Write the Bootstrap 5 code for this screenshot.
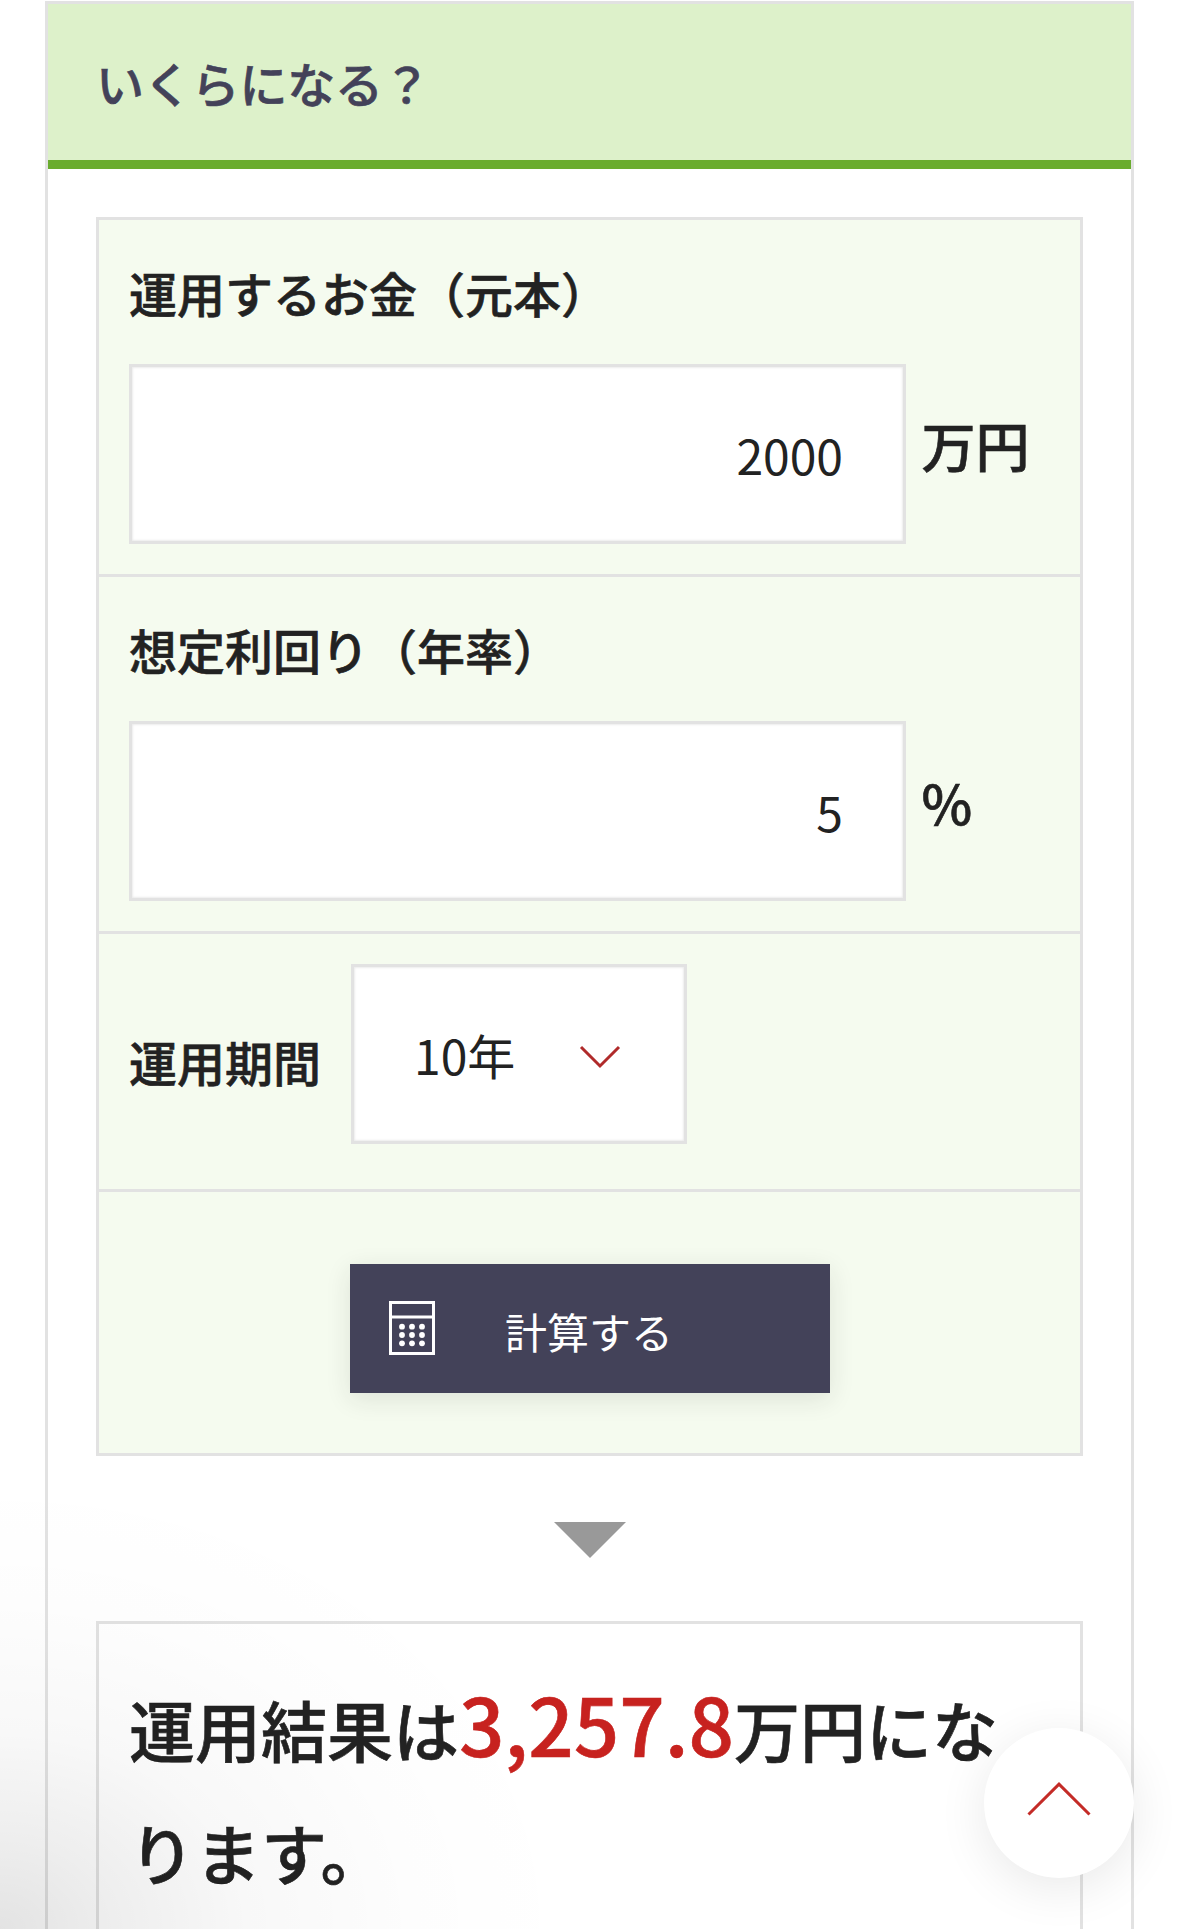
<!DOCTYPE html>
<html lang="ja">
<head>
<meta charset="utf-8">
<meta name="viewport" content="width=device-width, initial-scale=1">
<title>いくらになる？</title>
<link href="https://cdn.jsdelivr.net/npm/bootstrap@5.3.0/dist/css/bootstrap.min.css" rel="stylesheet">
<style>
  html, body { height: 1929px; overflow: hidden; }
  body { font-family: "Noto Sans CJK JP", sans-serif; color: #222; background: #fff; font-size: 48px; padding: 1px 45px 0; }
  .sim-panel { border: 3px solid #e2e2e2; border-bottom: 0; height: 1928px; }
  .sim-title, .sim-label, .sim-unit, .result-box { font-weight: 500; -webkit-text-stroke: .6px currentColor; }
  .sim-title { height: 165px; background: #ddf1ca; border-bottom: 9px solid #6aac2e; padding: 2px 48px 0; font-size: 48px; letter-spacing: -.2px; color: #434259; }
  .sim-body { padding: 48px 48px 0; }
  .sim-form { background: #f5fbef; border: 3px solid #e2e2e2; }
  .sim-row { border-bottom: 3px solid #e2e2e2; padding: 30px; }
  .field-row { height: 357px; padding-top: 36px; }
  .sim-label { font-size: 48px; line-height: 72px; display: block; margin: 0 0 36px; }
  .sim-input, .sim-select { height: 180px; border: 3px solid #e2e2e2; border-radius: 0; background: #fff; color: #222; font-size: 48px; line-height: 72px; box-shadow: inset 0 0 2px 1px #ececec; }
  .sim-input { width: 777px; flex: none; padding: 0 60px; text-align: right; }
  .sim-unit { font-size: 54px; line-height: 80px; padding: 0 0 18px 15.500px; }
  .period-row { height: 258px; }
  .period-row .sim-label { margin: 7px 30px 0 0; line-height: 180px; height: 180px; }
  .sim-select { width: 336px; padding: 0 63px 0 60px; }
  .sim-select svg { margin-top: 6px; }
  .calc-row { height: 261px; padding-top: 72px; }
  .calc-btn { width: 480px; height: 129px; border: 0; border-radius: 0; background: #434259; color: #fff; font-size: 42px; padding: 0 0 0 39px; box-shadow: 0 6px 24px rgba(34,34,34,.11); }
  .calc-btn:hover { background: #434259; color: #fff; }
  .calc-btn svg { margin-bottom: 2px; }
  .calc-btn span { margin-left: 70.500px; padding-top: 3px; }
  .down-mark { height: 165px; padding-top: 66px; }
  .result-box { border: 3px solid #e2e2e2; border-bottom: 0; height: 308px; padding: 43px 0 0 30px; font-size: 66px; line-height: 123px; white-space: nowrap; }
  .result-num { font-size: 79.800px; line-height: 1; color: #c7221f; }
  .top-btn { right: 45px; top: 1728px; width: 150px; height: 150px; background: #fff; box-shadow: 0 10px 50px rgba(0,0,0,.09); z-index: 3; }
  .top-btn svg { margin-bottom: 8px; }
  .corner-shade { left: 0; top: 1429px; width: 700px; height: 500px; pointer-events: none; background: radial-gradient(ellipse 580px 460px at 0 100%, rgba(0,0,0,.11) 0, rgba(0,0,0,.068) 20%, rgba(0,0,0,.028) 43%, rgba(0,0,0,.008) 72%, rgba(0,0,0,0) 100%); }
</style>
</head>
<body>
<main class="sim-panel">
  <h1 class="sim-title d-flex align-items-center m-0">いくらになる？</h1>
  <div class="sim-body">
    <form class="sim-form">
      <div class="sim-row field-row">
        <label class="sim-label" for="principal">運用するお金（元本）</label>
        <div class="d-flex align-items-center">
          <input class="form-control sim-input" id="principal" type="text" value="2000">
          <span class="sim-unit">万円</span>
        </div>
      </div>
      <div class="sim-row field-row">
        <label class="sim-label" for="rate">想定利回り（年率）</label>
        <div class="d-flex align-items-center">
          <input class="form-control sim-input" id="rate" type="text" value="5">
          <span class="sim-unit">%</span>
        </div>
      </div>
      <div class="sim-row period-row d-flex">
        <span class="sim-label">運用期間</span>
        <div class="sim-select d-flex align-items-center justify-content-between" role="button">
          <span>10年</span>
          <svg width="42" height="24" viewBox="0 0 42 24" fill="none" stroke="#b02a2a" stroke-width="3"><path d="M2 2 21 21 40 2"/></svg>
        </div>
      </div>
      <div class="calc-row d-flex justify-content-center">
        <button class="btn calc-btn d-flex align-items-center" type="button">
          <svg width="46" height="54" viewBox="0 0 46 54" fill="#fff"><path d="M1.500 1.500h43v51h-43zM1.500 16h43" fill="none" stroke="#fff" stroke-width="3"/><circle cx="13" cy="25.700" r="2.900"/><circle cx="23" cy="25.700" r="2.900"/><circle cx="33" cy="25.700" r="2.900"/><circle cx="13" cy="34" r="2.900"/><circle cx="23" cy="34" r="2.900"/><circle cx="33" cy="34" r="2.900"/><circle cx="13" cy="42.300" r="2.900"/><circle cx="23" cy="42.300" r="2.900"/><circle cx="33" cy="42.300" r="2.900"/></svg>
          <span>計算する</span>
        </button>
      </div>
    </form>
    <div class="down-mark d-flex justify-content-center align-items-start">
      <svg width="72" height="36" viewBox="0 0 72 36"><path d="M0 0h72L36 36z" fill="#999"/></svg>
    </div>
    <section class="result-box">運用結果は<span class="result-num">3,257.8</span>万円にな<br>ります。</section>
  </div>
</main>
<div class="corner-shade position-absolute"></div>
<a class="top-btn position-absolute rounded-circle d-flex align-items-center justify-content-center" href="#" aria-label="ページの先頭へ">
  <svg width="64" height="34" viewBox="0 0 64 34" fill="none" stroke="#c42b27" stroke-width="3"><path d="M1.500 32.500 32 2.200 62.500 32.500"/></svg>
</a>
<script src="https://cdn.jsdelivr.net/npm/bootstrap@5.3.0/dist/js/bootstrap.bundle.min.js"></script>
</body>
</html>
